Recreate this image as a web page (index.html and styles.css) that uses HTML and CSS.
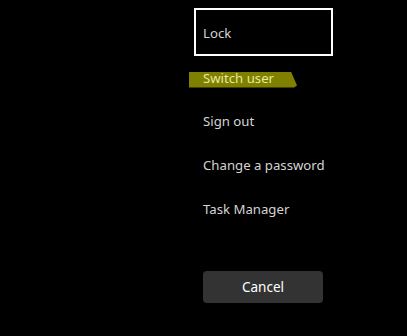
FILE: index.html
```html
<!DOCTYPE html>
<html lang="en">
<head>
    <meta charset="UTF-8">
    <title>Security options</title>
    <link rel="stylesheet" href="styles.css">
</head>
<body>

<div class="opciones">
    <div class="item foco">Lock</div>
    <div class="item"><span class="marca">Switch user</span></div>
    <div class="item">Sign out</div>
    <div class="item">Change a password</div>
    <div class="item">Task Manager</div>

    <button class="btn-cancel">Cancel</button>
</div>

</body>
</html>
```

FILE: styles.css
```css
html, body {
    margin: 0;
    padding: 0;
    width: 100%;
    height: 100%;
    background: #000000;
    color: #d4d4d4;
    font-family: "Noto Sans", "Open Sans", Arial, sans-serif;
    overflow: hidden;
}

/* Columna de opciones */
.opciones {
    display: flex;
    flex-direction: column;
    align-items: flex-start;
    padding: 10px 0 0 196px;
}

.item {
    width: 135px;
    height: 44px;
    box-sizing: border-box;
    padding: 2px 0 0 7px;
    display: flex;
    align-items: center;
    font-size: 13.2px;
    white-space: nowrap;
}

.item.foco {
    outline: 2px solid #ffffff;
}

/* Resaltado tipo cinta */
.marca {
    display: inline-block;
    box-sizing: border-box;
    width: 108px;
    margin: 5px 0 0 -14px;
    padding-left: 14px;
    height: 16px;
    line-height: 12px;
    background: #7f7f00;
    color: #e8e89a;
    clip-path: polygon(0 0, 102px 0, 108px 14px, 105px 16px, 0 16px);
}

.btn-cancel {
    margin: 41px 0 0 7px;
    width: 120px;
    height: 32px;
    background: #333333;
    color: #ffffff;
    border: none;
    border-radius: 4px;
    font-family: inherit;
    font-size: 13.5px;
}
```
